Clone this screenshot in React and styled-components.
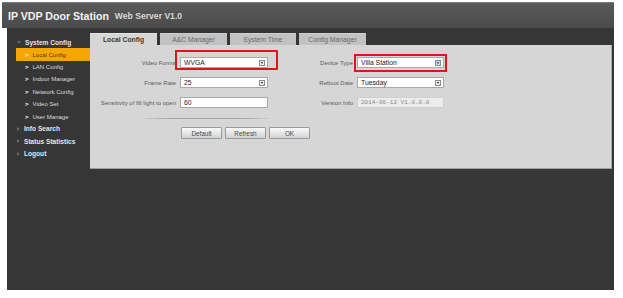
import styled, { createGlobalStyle } from "styled-components";

const GlobalStyle = createGlobalStyle`
  html, body {
    margin: 0;
    padding: 0;
    background: #ffffff;
  }
  body {
    font-family: "Liberation Sans", Arial, sans-serif;
  }
`;

const Page = styled.div`
  width: 612px;
  padding: 2px 0 0 2px;
`;

const Header = styled.div`
  height: 26px;
  display: flex;
  align-items: center;
  gap: 6px;
  padding-left: 6px;
  background: linear-gradient(#5a5a5a, #4b4b4b);
  border-top: 1px solid #7a7a7a;
  box-sizing: border-box;
`;

const Title = styled.span`
  font-size: 10.6px;
  font-weight: bold;
  color: #f2f2f2;
`;

const SubTitle = styled.span`
  font-size: 8.6px;
  font-weight: bold;
  color: #d8d8d8;
  padding-top: 1px;
`;

const Body = styled.div`
  margin-left: 5px;
  height: 262px;
  background: #363636;
  display: flex;
`;

const Sidebar = styled.div`
  width: 83px;
  flex-shrink: 0;
  padding-top: 8px;
  box-sizing: border-box;
`;

const Group = styled.div`
  height: 12.4px;
  display: flex;
  align-items: center;
  gap: 4px;
  padding-left: 10px;
  font-size: 6.6px;
  font-weight: bold;
  color: #e4e4e4;
`;

const Arrow = styled.span`
  width: 0;
  height: 0;
  border-style: solid;
  ${({ $open }) =>
    $open
      ? "border-width: 3px 2.5px 0 2.5px; border-color: #6a6a6a transparent transparent transparent;"
      : "border-width: 2.5px 0 2.5px 3px; border-color: transparent transparent transparent #6a6a6a;"}
`;

const Item = styled.div`
  height: 12.4px;
  margin-left: 9px;
  display: flex;
  align-items: center;
  gap: 4px;
  padding-left: 9px;
  font-size: 6px;
  color: ${({ $active }) => ($active ? "#5a3a00" : "#dcdcdc")};
  background: ${({ $active }) => ($active ? "#f6a600" : "transparent")};
`;

const Chevron = styled.span`
  font-size: 6px;
  font-weight: bold;
  color: #ffffff;
`;

const Main = styled.div`
  flex: 1;
  padding: 5px 2px 0 0;
`;

const TabBar = styled.div`
  display: flex;
  gap: 3px;
  height: 12px;
`;

const Tab = styled.div`
  width: ${({ $w }) => $w}px;
  display: flex;
  align-items: center;
  justify-content: center;
  font-size: 6.8px;
  font-weight: ${({ $active }) => ($active ? "bold" : "normal")};
  color: ${({ $active }) => ($active ? "#3a3a3a" : "#6a6a6a")};
  background: ${({ $active }) => ($active ? "#d6d6d6" : "#c2c2c2")};
  border-top: 1px solid ${({ $active }) => ($active ? "#e2e2e2" : "#d0d0d0")};
  box-sizing: border-box;
`;

const Panel = styled.div`
  background: #d6d6d6;
  padding: 12px 0 29px 0;
  border-right: 1px solid #a8a8a8;
  border-bottom: 1px solid #a0a0a0;
`;

const FormGrid = styled.div`
  display: grid;
  grid-template-columns: 86px 88px 81px 87px;
  column-gap: 4px;
  row-gap: 9px;
  align-items: center;
`;

const Label = styled.div`
  text-align: right;
  font-size: 6px;
  color: #5a5a5a;
  white-space: nowrap;
`;

const Cell = styled.div`
  position: relative;
  height: 11px;
`;

const Field = styled.div`
  height: 11px;
  box-sizing: border-box;
  display: flex;
  align-items: center;
  justify-content: space-between;
  padding: 0 2px 0 3px;
  background: ${({ $disabled }) => ($disabled ? "#ececec" : "#ffffff")};
  border: 1px solid ${({ $disabled }) => ($disabled ? "#d0d0d0" : "#a9a9a9")};
  font-size: 6.8px;
  color: #222;
`;

const FieldText = styled.span`
  font-family: ${({ $mono }) =>
    $mono ? '"Liberation Mono", "DejaVu Sans Mono", monospace' : "inherit"};
  font-size: ${({ $mono }) => ($mono ? "6px" : "6.8px")};
  color: ${({ $mono }) => ($mono ? "#8a8a8a" : "#222")};
`;

const DropButton = styled.span`
  width: 6px;
  height: 6px;
  box-sizing: border-box;
  border: 1px solid #8a8a8a;
  background: ${({ $hover }) => ($hover ? "#bcdff3" : "#eeeeee")};
  display: flex;
  align-items: center;
  justify-content: center;
  &::after {
    content: "";
    border-style: solid;
    border-width: 2px 1.5px 0 1.5px;
    border-color: #222 transparent transparent transparent;
  }
`;

const Highlight = styled.div`
  position: absolute;
  top: ${({ $t }) => $t}px;
  left: ${({ $l }) => $l}px;
  right: ${({ $r }) => $r}px;
  bottom: ${({ $b }) => $b}px;
  border: 2px solid #e0141c;
  pointer-events: none;
`;

const Divider = styled.div`
  margin: 10px 0 0 50px;
  width: 132px;
  height: 1px;
  background: linear-gradient(90deg, rgba(160, 160, 160, 0), #a8a8a8 20%, #a8a8a8 80%, rgba(160, 160, 160, 0));
`;

const ButtonRow = styled.div`
  display: flex;
  gap: 3px;
  margin: 8px 0 0 91px;
`;

const Button = styled.button`
  width: 41px;
  height: 12px;
  padding: 0;
  font-family: inherit;
  font-size: 6.4px;
  color: #4a4a4a;
  background: linear-gradient(#fafafa, #d2d2d2);
  border: 1px solid #9a9a9a;
  border-radius: 1px;
`;

const Select = ({ value, hover }) => (
  <Field>
    <FieldText>{value}</FieldText>
    <DropButton $hover={hover} />
  </Field>
);

const menu = ["Local Config", "LAN Config", "Indoor Manager", "Network Config", "Video Set", "User Manage"];
const tabs = [
  { name: "Local Config", w: 67 },
  { name: "A&C Manager", w: 67 },
  { name: "System Time", w: 66 },
  { name: "Config Manager", w: 67 },
];

export default function App() {
  return (
    <>
      <GlobalStyle />
      <Page>
        <Header>
          <Title>IP VDP Door Station</Title>
          <SubTitle>Web Server V1.0</SubTitle>
        </Header>
        <Body>
          <Sidebar>
            <Group>
              <Arrow $open />
              System Config
            </Group>
            {menu.map((m, i) => (
              <Item key={m} $active={i === 0}>
                <Chevron>&gt;</Chevron>
                {m}
              </Item>
            ))}
            <Group>
              <Arrow />
              Info Search
            </Group>
            <Group>
              <Arrow />
              Status Statistics
            </Group>
            <Group>
              <Arrow />
              Logout
            </Group>
          </Sidebar>
          <Main>
            <TabBar>
              {tabs.map((t, i) => (
                <Tab key={t.name} $w={t.w} $active={i === 0}>
                  {t.name}
                </Tab>
              ))}
            </TabBar>
            <Panel>
              <FormGrid>
                <Label>Video Forma</Label>
                <Cell>
                  <Select value="WVGA" />
                  <Highlight $t={-7} $l={-5} $r={-10} $b={-2} />
                </Cell>
                <Label>Device Type</Label>
                <Cell>
                  <Select value="Villa Station" hover />
                  <Highlight $t={-3} $l={-3} $r={-3} $b={-4} />
                </Cell>

                <Label>Frame Rate</Label>
                <Cell>
                  <Select value="25" />
                </Cell>
                <Label>Reboot Date</Label>
                <Cell>
                  <Select value="Tuesday" />
                </Cell>

                <Label>Sensitivity of fill light to open</Label>
                <Cell>
                  <Field>
                    <FieldText>60</FieldText>
                  </Field>
                </Cell>
                <Label>Version Info</Label>
                <Cell>
                  <Field $disabled>
                    <FieldText $mono>2014-06-12 V1.0.0.0</FieldText>
                  </Field>
                </Cell>
              </FormGrid>
              <Divider />
              <ButtonRow>
                <Button>Default</Button>
                <Button>Refresh</Button>
                <Button>OK</Button>
              </ButtonRow>
            </Panel>
          </Main>
        </Body>
      </Page>
    </>
  );
}
